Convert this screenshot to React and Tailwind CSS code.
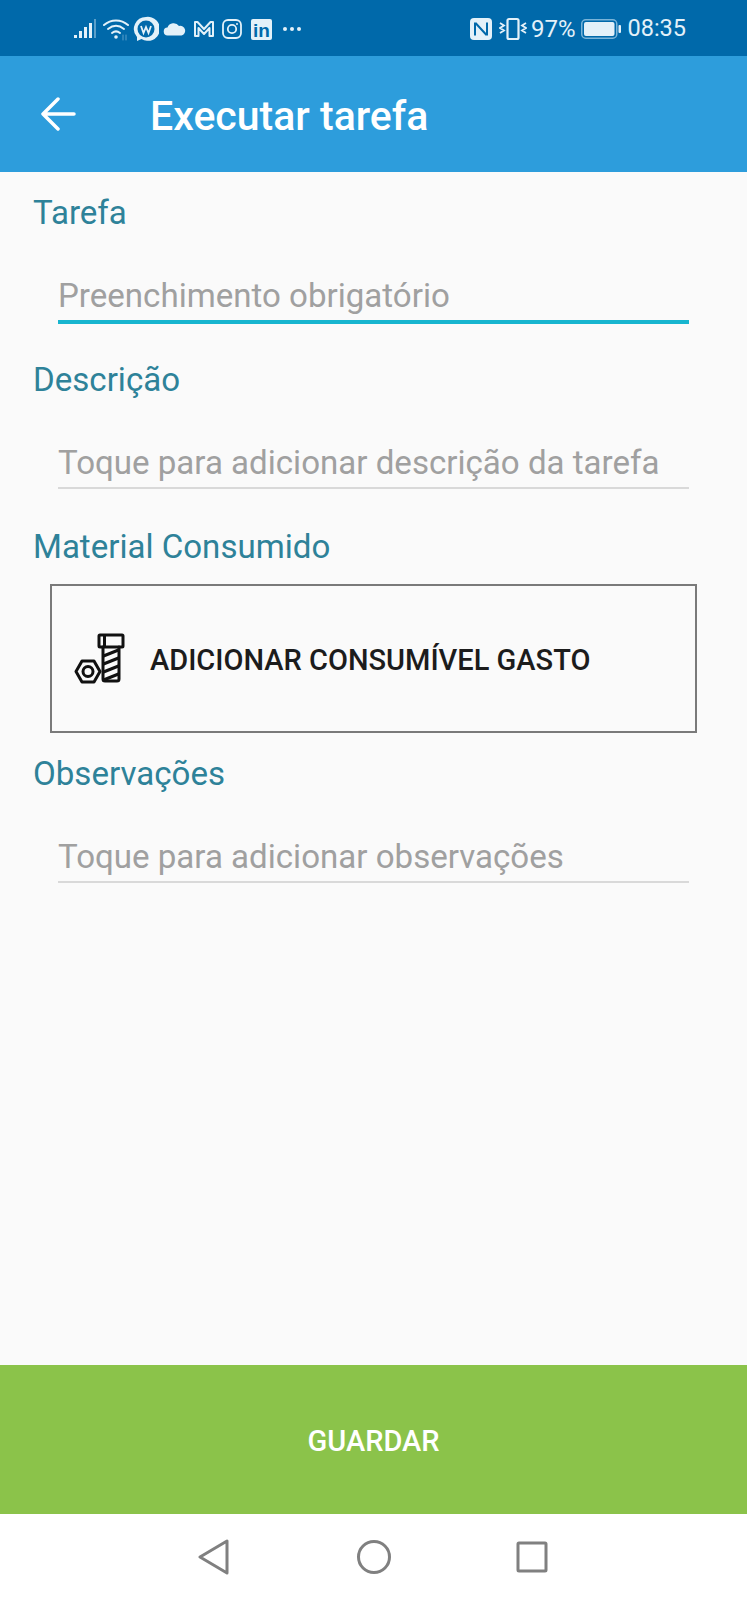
const Field = ({ label, placeholder, active }) => (
  <div>
    <div className="pl-[33px] pb-[1px] h-[40px] flex items-center text-[33.1px] leading-none text-[#2e8299]">{label}</div>
    <div className="mx-[58px] mt-[40px]">
      <div className="h-[44px] pt-[1px] flex items-center text-[33.1px] leading-none text-[#a0a0a0]">{placeholder}</div>
      {active ? (
        <div className="mt-[3px] h-[4px] bg-[#17b5cf]"></div>
      ) : (
        <div className="mt-[3px] h-[2px] bg-[#d9d9d9]"></div>
      )}
    </div>
  </div>
);

const BoltIcon = () => (
  <svg width="52" height="52" viewBox="0 0 52 52" fill="none" stroke="#111" strokeWidth="3" strokeLinejoin="round" strokeLinecap="round">
    <rect x="25" y="2" width="24" height="12" rx="1" />
    <path d="M30.500 2.500v11" />
    <path d="M29 14v32a2 2 0 0 0 2 2h12a2 2 0 0 0 2-2V14" />
    <path d="M29.500 23l15-6M29.500 31l15-6M29.500 39l15-6M29.500 47l15-6" />
    <path d="M8 28h12l6 10.500L20 49H8L2 38.500z" />
    <circle cx="14" cy="38.500" r="5" />
  </svg>
);

const StatusBar = () => (
  <div className="h-[56px] bg-[#0069aa] flex items-center justify-between pl-[73px] pr-[61px] text-[#e3f1f9]">
    <div className="flex items-center pt-[2px]">
      <svg width="24" height="24" viewBox="0 0 24 24" fill="#e3f1f9">
        <rect x="1" y="18" width="3" height="3" />
        <rect x="6" y="14" width="3" height="7" />
        <rect x="11" y="10" width="3" height="11" />
        <rect x="16" y="6" width="3" height="15" />
        <rect x="21" y="2" width="2" height="19" fill="#5b9fc9" />
      </svg>
      <svg className="ml-[6px]" width="26" height="24" viewBox="0 0 26 24" fill="none" stroke="#e3f1f9" strokeWidth="2" strokeLinecap="round">
        <path d="M1 8c7-6 17-6 24 0" />
        <path d="M5 12c5-4 11-4 16 0" />
        <path d="M9 16c2.500-2 5.500-2 8 0" />
        <circle cx="13" cy="20" r="1.800" fill="#e3f1f9" stroke="none" />
        <path d="M20 18v5M23 18v5" stroke="#5b9fc9" strokeWidth="1" />
      </svg>
      <svg className="ml-[4px]" width="26" height="26" viewBox="0 0 26 26">
        <path d="M13 1a12 12 0 0 0-9 20v4l4.500-2A12 12 0 1 0 13 1z" fill="#e3f1f9" />
        <circle cx="13" cy="13" r="8.500" fill="#0069aa" />
        <path d="M8 10l2.500 7 2.500-6 2.500 6L18 10" fill="none" stroke="#e3f1f9" strokeWidth="1.800" />
      </svg>
      <svg className="ml-[4px]" width="23" height="14" viewBox="0 0 23 14" fill="#e3f1f9">
        <path d="M5 13.500a4 4 0 0 1-.5-8A6.500 6.500 0 0 1 16 4a4.800 4.800 0 0 1 2.500 9.500z" />
      </svg>
      <svg className="ml-[7px]" width="22" height="18" viewBox="0 0 22 18" fill="none" stroke="#e3f1f9" strokeWidth="2" strokeLinejoin="round">
        <path d="M2 16V2h2.500L11 9l6.500-7H20v14h-3.500V8L11 14 5.500 8v8z" />
      </svg>
      <svg className="ml-[7px]" width="20" height="20" viewBox="0 0 20 20" fill="none" stroke="#e3f1f9" strokeWidth="1.800">
        <rect x="1" y="1" width="18" height="18" rx="5" />
        <circle cx="10" cy="10" r="4.200" />
        <circle cx="15" cy="5" r="1" fill="#e3f1f9" stroke="none" />
      </svg>
      <div className="ml-[9px] w-[21px] h-[21px] rounded-[2px] bg-[#e3f1f9] flex items-end justify-center font-['Liberation_Sans',sans-serif] font-bold text-[19px] leading-none text-[#0069aa]">in</div>
      <div className="ml-[11px] flex gap-[3px]">
        <div className="w-[4px] h-[4px] rounded-full bg-[#e3f1f9]"></div>
        <div className="w-[4px] h-[4px] rounded-full bg-[#e3f1f9]"></div>
        <div className="w-[4px] h-[4px] rounded-full bg-[#e3f1f9]"></div>
      </div>
    </div>
    <div className="flex items-center text-[23.5px] leading-none pt-[2px]">
      <svg width="22" height="22" viewBox="0 0 22 22">
        <rect width="22" height="22" rx="4" fill="#e3f1f9" />
        <path d="M5 4.500v13M17 4.500v13M5.500 5l11 12" fill="none" stroke="#0069aa" strokeWidth="2" />
      </svg>
      <svg className="ml-[7px]" width="28" height="24" viewBox="0 0 28 24" fill="none" stroke="#e3f1f9" strokeWidth="1.800">
        <rect x="8.500" y="2" width="11" height="20" rx="1.500" strokeWidth="2.200" />
        <path d="M1 6l4 2.500-4 2.500 4 2.500-4 2.500M27 6l-4 2.500 4 2.500-4 2.500 4 2.500" />
      </svg>
      <span className="ml-[4px] text-[24px]">97%</span>
      <svg className="ml-[6px]" width="40" height="20" viewBox="0 0 40 20">
        <rect x="0.750" y="0.750" width="35" height="18.500" rx="4" fill="none" stroke="#79b4d8" strokeWidth="1.500" />
        <rect x="3" y="3" width="30.500" height="14" rx="2" fill="#e3f1f9" />
        <rect x="37.500" y="6" width="2.500" height="8" rx="1" fill="#e3f1f9" />
      </svg>
      <span className="ml-[6px]">08:35</span>
    </div>
  </div>
);

const App = () => {
  return (
    <div className="w-[747px] h-[1600px] flex flex-col bg-[#fafafa] font-['Roboto',sans-serif]">
      <StatusBar />

      <div className="h-[116px] bg-[#2d9ddc] flex items-center pl-[41px]">
        <svg width="35" height="34" viewBox="0 0 35 34" fill="none" stroke="#fff" strokeWidth="3.500" strokeLinecap="round" strokeLinejoin="round">
          <path d="M2 17h31M17 2 2 17l15 15" />
        </svg>
        <div className="ml-[74px] pt-[4px] text-[41px] leading-none font-medium text-white">Executar tarefa</div>
      </div>

      <div className="flex-1 pt-[21px]">
        <Field label="Tarefa" placeholder="Preenchimento obrigatório" active />
        <div className="mt-[36px]">
          <Field label="Descrição" placeholder="Toque para adicionar descrição da tarefa" />
        </div>
        <div className="mt-[38px] pl-[33px] pb-[1px] h-[40px] flex items-center text-[33.1px] leading-none text-[#2e8299]">Material Consumido</div>
        <div className="mx-[50px] mt-[17px] h-[149px] border-2 border-[#7a7a7a] flex items-center pl-[22px]">
          <BoltIcon />
          <div className="ml-[24px] pt-[3px] text-[29px] leading-none font-medium text-[#1c1c1c]">ADICIONAR CONSUMÍVEL GASTO</div>
        </div>
        <div className="mt-[21px]">
          <Field label="Observações" placeholder="Toque para adicionar observações" />
        </div>
      </div>

      <div className="h-[149px] bg-[#8bc34a] flex items-center justify-center pt-[3px] text-[29px] leading-none font-medium text-white">GUARDAR</div>

      <div className="h-[86px] bg-white flex items-center pl-[198px] pb-[1px]">
        <svg width="32" height="36" viewBox="0 0 32 36" fill="none" stroke="#808080" strokeWidth="3" strokeLinejoin="round">
          <path d="M29 2v32L2 18z" />
        </svg>
        <svg className="ml-[126px]" width="36" height="36" viewBox="0 0 36 36" fill="none" stroke="#808080" strokeWidth="3">
          <circle cx="18" cy="18" r="15.500" />
        </svg>
        <svg className="ml-[124px]" width="32" height="32" viewBox="0 0 32 32" fill="none" stroke="#808080" strokeWidth="3" strokeLinejoin="round">
          <rect x="2" y="2" width="28" height="28" rx="1" />
        </svg>
      </div>
    </div>
  );
};

export default App;
